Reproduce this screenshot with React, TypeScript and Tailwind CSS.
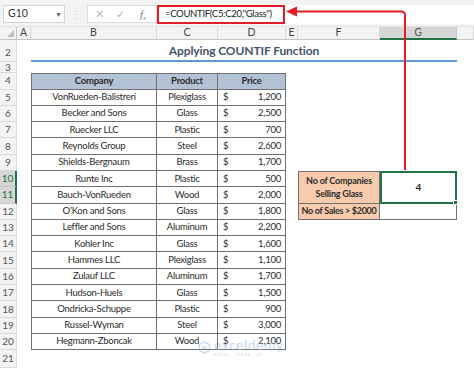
import React from 'react';

const data: [string, string, string][] = [
  ['VonRueden-Balistreri', 'Plexiglass', '1,200'],
  ['Becker and Sons', 'Glass', '2,500'],
  ['Ruecker LLC', 'Plastic', '700'],
  ['Reynolds Group', 'Steel', '2,600'],
  ['Shields-Bergnaum', 'Brass', '1,700'],
  ['Runte Inc', 'Plastic', '500'],
  ['Bauch-VonRueden', 'Wood', '2,000'],
  ['O’Kon and Sons', 'Glass', '1,800'],
  ['Leffler and Sons', 'Aluminum', '2,200'],
  ['Kohler Inc', 'Glass', '1,600'],
  ['Hammes LLC', 'Plexiglass', '1,100'],
  ['Zulauf LLC', 'Aluminum', '1,700'],
  ['Hudson-Huels', 'Glass', '1,500'],
  ['Ondricka-Schuppe', 'Plastic', '900'],
  ['Russel-Wyman', 'Steel', '3,000'],
  ['Hegmann-Zboncak', 'Wood', '2,100'],
];

const RowHead: React.FC<{ n: number; active?: boolean; bottom?: boolean }> = ({ n, active, bottom }) => (
  <div
    className={
      'flex justify-center text-[10px] border-b border-r ' +
      (bottom ? 'items-end pb-[1px] ' : 'items-center ') +
      (active
        ? 'bg-[#d6d6d6] text-[#217346] border-b-[#c8c8c8] border-r-2 border-r-[#217346]'
        : 'bg-[#f3f3f3] text-[#555] border-[#dadada]')
    }
  >
    {n}
  </div>
);

const ColHead: React.FC<{ label?: string; active?: boolean }> = ({ label, active }) => (
  <div
    className={
      'flex items-center justify-center text-[10.5px] border-r ' +
      (active
        ? 'bg-[#d6d6d6] text-[#555] border-[#c8c8c8] border-b-2 border-b-[#217346]'
        : 'bg-[#f3f3f3] text-[#444] border-[#dadada] border-b border-b-[#c4c4c4]')
    }
  >
    {label}
  </div>
);

const Empty = () => <div />;

const cell = 'flex items-center border-r border-b border-[#707070] text-[9.5px] tracking-[-0.25px] text-[#2b2b2b]';

const FormulaBar = () => (
  <div className="h-[27px] bg-[#f3f3f3] flex items-start pt-[5px] pl-[3px] border-b border-[#e2e2e2]">
    <div className="w-[62px] h-[18px] bg-white border border-[#d4d4d4] flex items-center justify-between pl-[4px] pr-[2px] text-[10.5px] text-[#333]">
      <span>G10</span>
      <span className="text-[7px] text-[#666]">▼</span>
    </div>
    <div className="w-[22px] h-[18px] flex items-center justify-center text-[10px] text-[#c4c4c4]">⋮</div>
    <div className="w-[70px] h-[18px] bg-white border border-[#dcdcdc] flex items-center text-[11px] text-[#b8b8b8]">
      <span className="ml-[7px]">✕</span>
      <span className="ml-[12px]">✓</span>
      <span className="ml-[15px] italic font-['Liberation_Serif',serif] text-[#777] text-[11px]">
        f<sub className="text-[7px]">x</sub>
      </span>
    </div>
    <div className="flex-1 h-[19px] bg-white flex items-center">
      <div className="w-[128px] h-[19px] border-2 border-[#e21d26] flex items-center pl-[6px] text-[9.5px] tracking-[-0.3px] text-[#222] whitespace-nowrap">
        =COUNTIF(C5:C20,"Glass")
      </div>
    </div>
  </div>
);

const Sheet = () => (
  <div className="grid grid-cols-[17px_14px_126px_61px_68px_12px_82px_77px_1fr] grid-rows-[13px_22px_11px_16.5px_repeat(16,16.3px)_18px]">
    {/* column headers */}
    <div className="relative bg-[#f3f3f3] border-r border-b border-[#c4c4c4]">
      <div className="absolute right-[2px] bottom-[2px] w-0 h-0 border-l-[7px] border-l-transparent border-b-[7px] border-b-[#bfbfbf]" />
    </div>
    <ColHead label="A" />
    <ColHead label="B" />
    <ColHead label="C" />
    <ColHead label="D" />
    <ColHead label="E" />
    <ColHead label="F" />
    <ColHead label="G" active />
    <ColHead />

    {/* row 2: title */}
    <RowHead n={2} bottom />
    <Empty />
    <div className="col-span-6 flex items-center justify-center pt-[2px] border-b-2 border-[#5b9bd5] text-[12px] tracking-[-0.1px] font-bold text-[#44546a]">
      Applying COUNTIF Function
    </div>
    <Empty />

    {/* row 3 */}
    <RowHead n={3} />
    <Empty /><Empty /><Empty /><Empty /><Empty /><Empty /><Empty /><Empty />

    {/* row 4: table header */}
    <RowHead n={4} />
    <Empty />
    <div className={cell + ' justify-center font-bold bg-[#b4c2d6] border-t border-l'}>Company</div>
    <div className={cell + ' justify-center font-bold bg-[#b4c2d6] border-t'}>Product</div>
    <div className={cell + ' justify-center font-bold bg-[#b4c2d6] border-t'}>Price</div>
    <Empty /><Empty /><Empty /><Empty />

    {data.map(([company, product, price], i) => {
      const n = i + 5;
      return (
        <React.Fragment key={n}>
          <RowHead n={n} active={n === 10 || n === 11} />
          <Empty />
          <div className={cell + ' justify-center border-l'}>{company}</div>
          <div className={cell + ' justify-center'}>{product}</div>
          <div className={cell + ' justify-between pl-[5px] pr-[4px]'}>
            <span>$</span>
            <span>{price}</span>
          </div>
          <Empty />
          {n === 10 && (
            <>
              <div className="row-span-2 flex flex-col items-center justify-center leading-[13px] bg-[#f8cbad] border border-[#707070] text-[9px] tracking-[-0.2px] font-bold text-[#2b2b2b] whitespace-nowrap">
                <span>No of Companies</span>
                <span>Selling Glass</span>
              </div>
              <div className="relative row-span-2 flex items-center justify-center border-2 border-[#217346] text-[10px] font-bold text-[#2b2b2b]">
                4
                <div className="absolute right-[-3px] bottom-[-3px] w-[5px] h-[5px] bg-[#217346] border border-white" />
              </div>
            </>
          )}
          {n === 12 && (
            <>
              <div className="flex items-center justify-center bg-[#f8cbad] border-l border-r border-b border-[#707070] text-[9px] tracking-[-0.3px] font-bold text-[#2b2b2b] whitespace-nowrap">
                No of Sales &gt; $2000
              </div>
              <div className="border-r border-b border-[#707070]" />
            </>
          )}
          {n !== 10 && n !== 11 && n !== 12 && (
            <>
              <Empty />
              <Empty />
            </>
          )}
          <Empty />
        </React.Fragment>
      );
    })}

    {/* row 21 */}
    <RowHead n={21} />
    <Empty /><Empty /><Empty /><Empty /><Empty /><Empty /><Empty /><Empty />
  </div>
);

const Arrow = () => (
  <svg className="absolute left-0 top-0 pointer-events-none" width="474" height="368" viewBox="0 0 474 368">
    <path d="M405 170 V15 Q405 11.5 401 11.5 H294" fill="none" stroke="#e21d26" strokeWidth="2" />
    <polygon points="286,11.5 297,6.5 297,16.5" fill="#e21d26" />
  </svg>
);

const Watermark = () => (
  <div className="absolute left-[198px] top-[338px] flex items-center gap-[3px] opacity-50 pointer-events-none">
    <svg width="13" height="13" viewBox="0 0 14 14">
      <path d="M7 1 L12.5 4 V10 L7 13 L1.5 10 V4 Z" fill="none" stroke="#8fb3de" strokeWidth="1.5" />
      <path d="M4.5 5.5 L9.5 8.5 M9.5 5.5 L4.5 8.5" stroke="#8fb3de" strokeWidth="1.2" />
    </svg>
    <div className="flex flex-col leading-none">
      <span className="text-[14px] text-[#8fb3de] tracking-[0.5px]">exceldemy</span>
      <span className="text-[4px] text-[#9aa9bb] tracking-[1px] mt-[1px]">EXCEL · DATA · BI</span>
    </div>
  </div>
);

export default function App() {
  return (
    <div className="relative w-[474px] h-[368px] overflow-hidden bg-white font-['Lato',sans-serif] text-[#262626]">
      <FormulaBar />
      <Sheet />
      <Arrow />
      <Watermark />
    </div>
  );
}
